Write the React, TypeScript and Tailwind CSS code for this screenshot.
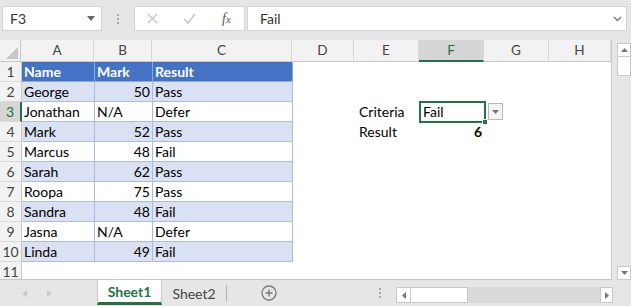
import * as React from "react";

const cols = [
  { key: "A", w: "w-[73px]" },
  { key: "B", w: "w-[58px]" },
  { key: "C", w: "w-[140px]" },
  { key: "D", w: "w-[62px]" },
  { key: "E", w: "w-[65px]" },
  { key: "F", w: "w-[65px]" },
  { key: "G", w: "w-[65px]" },
  { key: "H", w: "w-[62px]" },
];

const rows: [string, string, string][] = [
  ["George", "50", "Pass"],
  ["Jonathan", "N/A", "Defer"],
  ["Mark", "52", "Pass"],
  ["Marcus", "48", "Fail"],
  ["Sarah", "62", "Pass"],
  ["Roopa", "75", "Pass"],
  ["Sandra", "48", "Fail"],
  ["Jasna", "N/A", "Defer"],
  ["Linda", "49", "Fail"],
];

function RowHead({ n }: { n: number }) {
  const sel = n === 3;
  return (
    <div
      className={
        "w-[22px] h-full flex items-center justify-center shrink-0 border-b border-[#dadada] " +
        (sel
          ? "bg-[#d6d6d6] text-[#217346] border-r-2 border-r-[#217346]"
          : "bg-[#f2f2f2] text-[#444] border-r border-r-[#c8c8c8]")
      }
    >
      {n}
    </div>
  );
}

function Row({ n, children }: { n: number; children?: React.ReactNode }) {
  return (
    <div className="h-[20px] flex">
      <RowHead n={n} />
      {children}
    </div>
  );
}

function Blank({ w, children }: { w: string; children?: React.ReactNode }) {
  return <div className={w + " h-full shrink-0 relative"}>{children}</div>;
}

export default function App() {
  return (
    <div className="w-[631px] h-[306px] bg-[#e6e6e6] flex flex-col overflow-hidden text-[14px] text-black font-['Lato',sans-serif]">
      {/* formula bar */}
      <div className="h-[40px] flex items-start pt-[6px] pl-[2px] shrink-0">
        <div className="w-[100px] h-[25px] bg-white border border-[#d4d4d4] flex items-center justify-between pl-[7px] pr-[6px] text-[14px] text-[#333]">
          <span>F3</span>
          <svg width="8" height="5" viewBox="0 0 8 5"><path d="M0 0h8L4 5z" fill="#666" /></svg>
        </div>
        <div className="w-[32px] h-[25px] flex flex-col items-center justify-center gap-[2px]">
          <span className="w-[2px] h-[2px] bg-[#aaa]" />
          <span className="w-[2px] h-[2px] bg-[#aaa]" />
          <span className="w-[2px] h-[2px] bg-[#aaa]" />
        </div>
        <div className="w-[111px] h-[25px] bg-white border border-[#d4d4d4] flex items-center">
          <svg className="ml-[12px]" width="11" height="11" viewBox="0 0 11 11"><path d="M1 1l9 9M10 1l-9 9" stroke="#c4c4c4" strokeWidth="1.4" /></svg>
          <svg className="ml-[25px]" width="13" height="11" viewBox="0 0 13 11"><path d="M1 6l4 4 7-9" stroke="#c4c4c4" strokeWidth="1.6" fill="none" /></svg>
          <span className="ml-[26px] text-[14px] italic font-['Liberation_Serif',serif] text-[#555]">f<span className="text-[11px]">x</span></span>
        </div>
        <div className="ml-[2px] w-[380px] h-[25px] bg-white border border-[#d4d4d4] flex items-center justify-between pl-[12px] pr-[4px] text-[14px] text-[#333]">
          <span>Fail</span>
          <svg width="9" height="6" viewBox="0 0 9 6"><path d="M1 1l3.5 3.5L8 1" stroke="#777" strokeWidth="1.3" fill="none" /></svg>
        </div>
      </div>

      {/* sheet + vertical scrollbar */}
      <div className="h-[240px] flex shrink-0">
        <div className="w-[612px] bg-white border-r border-[#c8c8c8] overflow-hidden flex flex-col border-b">
          {/* column headers */}
          <div className="h-[22px] flex shrink-0 text-[#444] text-[13.5px]">
            <div className="w-[22px] h-full bg-[#f2f2f2] border-r border-b border-[#c8c8c8] flex items-end justify-end p-[2px]">
              <svg width="12" height="12" viewBox="0 0 12 12"><path d="M12 0v12H0z" fill="#c6c6c6" /></svg>
            </div>
            {cols.map((c) => (
              <div
                key={c.key}
                className={
                  c.w +
                  " h-full flex items-center justify-center shrink-0 border-r border-[#d8d8d8] " +
                  (c.key === "F"
                    ? "bg-[#d6d6d6] text-[#217346] border-b-2 border-b-[#217346]"
                    : "bg-[#f2f2f2] border-b border-b-[#c8c8c8]")
                }
              >
                {c.key}
              </div>
            ))}
          </div>

          {/* row 1: table header */}
          <Row n={1}>
            <div className="w-[73px] h-full bg-[#4472c4] text-white font-bold pl-[2px] flex items-center border-r border-b border-[#8ea9db]">Name</div>
            <div className="w-[58px] h-full bg-[#4472c4] text-white font-bold pl-[2px] flex items-center border-r border-b border-[#8ea9db]">Mark</div>
            <div className="w-[140px] h-full bg-[#4472c4] text-white font-bold pl-[2px] flex items-center border-r border-b border-[#8ea9db]">Result</div>
          </Row>

          {rows.map((r, i) => {
            const n = i + 2;
            const band = n % 2 === 0 ? "bg-[#d9e1f2]" : "bg-white";
            const num = r[1] !== "N/A";
            return (
              <Row n={n} key={n}>
                <div className={"w-[73px] h-full shrink-0 pl-[2px] flex items-center border-r border-b border-[#a9bde3] " + band}>{r[0]}</div>
                <div className={"w-[58px] h-full shrink-0 px-[2px] flex items-center border-r border-b border-[#a9bde3] " + band + (num ? " justify-end" : "")}>{r[1]}</div>
                <div className={"w-[140px] h-full shrink-0 pl-[2px] flex items-center border-r border-b border-[#a9bde3] " + band}>{r[2]}</div>
                <Blank w="w-[62px]" />
                <Blank w="w-[65px]">
                  {n === 3 && <span className="absolute left-[4px] top-[1px] leading-[18px]">Criteria</span>}
                  {n === 4 && <span className="absolute left-[4px] top-[1px] leading-[18px]">Result</span>}
                </Blank>
                <Blank w="w-[65px]">
                  {n === 3 && (
                    <div className="absolute -left-[1px] -top-[1px] w-[67px] h-[22px] border-2 border-[#217346] pl-[2px] leading-[18px] z-10">
                      Fail
                      <span className="absolute -right-[4px] -bottom-[4px] w-[6px] h-[6px] bg-[#217346] border border-white" />
                    </div>
                  )}
                  {n === 4 && <span className="absolute right-[3px] top-[1px] leading-[18px] font-bold">6</span>}
                </Blank>
                <Blank w="w-[65px]">
                  {n === 3 && (
                    <div className="absolute left-[3px] top-[1px] w-[15px] h-[17px] bg-[#f4f4f4] border border-[#b8b8b8] flex items-center justify-center z-10">
                      <svg width="7" height="4" viewBox="0 0 7 4"><path d="M0 0h7L3.5 4z" fill="#777" /></svg>
                    </div>
                  )}
                </Blank>
                <Blank w="w-[62px]" />
              </Row>
            );
          })}
          <Row n={11} />
        </div>

        {/* vertical scrollbar */}
        <div className="w-[19px] flex flex-col pl-[5px] pt-[3px] pb-[0px]">
          <div className="w-[14px] h-[14px] bg-white border border-[#c8c8c8] flex items-center justify-center">
            <svg width="7" height="4" viewBox="0 0 7 4"><path d="M0 4h7L3.5 0z" fill="#777" /></svg>
          </div>
          <div className="w-[14px] h-[19px] bg-white border-x border-b border-[#c8c8c8]" />
          <div className="flex-1" />
          <div className="w-[14px] h-[14px] bg-white border border-[#c8c8c8] flex items-center justify-center">
            <svg width="7" height="4" viewBox="0 0 7 4"><path d="M0 0h7L3.5 4z" fill="#777" /></svg>
          </div>
        </div>
      </div>

      {/* tabs */}
      <div className="h-[26px] flex items-start shrink-0 text-[14px]">
        <div className="w-[97px] h-full flex items-center pl-[22px] gap-[20px]">
          <svg width="5" height="7" viewBox="0 0 5 7"><path d="M5 0v7L0 3.5z" fill="#c8c8c8" /></svg>
          <svg width="5" height="7" viewBox="0 0 5 7"><path d="M0 0v7l5-3.5z" fill="#c8c8c8" /></svg>
        </div>
        <div className="w-[65px] h-[25px] bg-white border-l border-r border-[#c8c8c8] border-b-[3px] border-b-[#217346] flex items-center justify-center font-bold text-[#217346]">
          Sheet1
        </div>
        <div className="w-[64px] h-full flex items-center justify-center text-[#444]">Sheet2</div>
        <div className="w-[1px] h-[16px] mt-[5px] bg-[#b0b0b0]" />
        <div className="ml-[34px] h-full flex items-center">
          <svg width="16" height="16" viewBox="0 0 16 16">
            <circle cx="8" cy="8" r="7" fill="none" stroke="#7a7a7a" strokeWidth="1.3" />
            <path d="M8 4.5v7M4.5 8h7" stroke="#7a7a7a" strokeWidth="1.4" />
          </svg>
        </div>
        <div className="ml-[102px] h-full flex flex-col items-center justify-center gap-[2px]">
          <span className="w-[2px] h-[2px] bg-[#aaa]" />
          <span className="w-[2px] h-[2px] bg-[#aaa]" />
          <span className="w-[2px] h-[2px] bg-[#aaa]" />
        </div>
        <div className="ml-[15px] mt-[7px] w-[217px] h-[16px] bg-[#dadada] flex">
          <div className="w-[15px] h-full bg-white border border-[#c8c8c8] flex items-center justify-center">
            <svg width="4" height="7" viewBox="0 0 4 7"><path d="M4 0v7L0 3.5z" fill="#777" /></svg>
          </div>
          <div className="w-[57px] h-full bg-white border-y border-r border-[#c8c8c8]" />
          <div className="flex-1" />
          <div className="w-[13px] h-full bg-white border border-[#c8c8c8] flex items-center justify-center">
            <svg width="4" height="7" viewBox="0 0 4 7"><path d="M0 0v7l4-3.5z" fill="#777" /></svg>
          </div>
        </div>
      </div>
    </div>
  );
}
